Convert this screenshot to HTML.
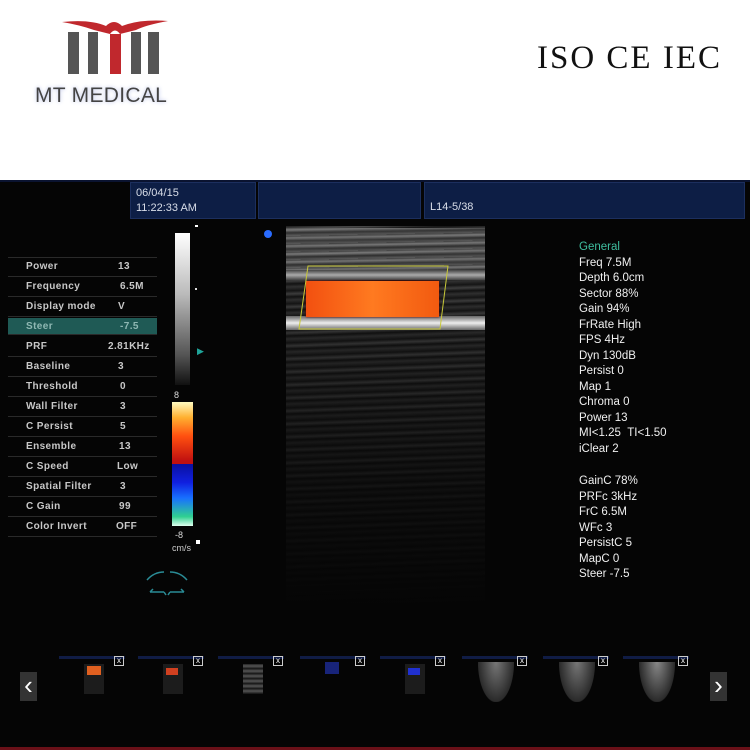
<!DOCTYPE html>
<html><head><meta charset="utf-8"><style>
*{margin:0;padding:0;box-sizing:border-box}
body{width:750px;height:750px;background:#fff;position:relative;overflow:hidden;font-family:"Liberation Sans",sans-serif}
.a{position:absolute}
#dark{left:0;top:180px;width:750px;height:570px;background:#050505}
.hb{background:#0d1e45;border:1px solid #1c2f5e;color:#d8dde8;font-size:11px;line-height:15px;padding:3px 5px}
.row{position:absolute;left:8px;width:149px;height:20px;border-bottom:1px solid #2a2a2a;font-size:10px;font-weight:bold;color:#c8c8c8;letter-spacing:.4px}
.row span{position:absolute;top:4px}
.rt{position:absolute;left:579px;color:#f0f0f0;font-size:11.5px;line-height:15.5px}
.th{position:absolute;top:656px;width:66px;height:56px}
.x{position:absolute;left:55px;top:0;width:10px;height:10px;border:1px solid #ccc;color:#fff;font-size:8px;text-align:center;line-height:8px}
.bar{position:absolute;left:0;top:0;width:66px;height:3px;background:#101c45}
</style></head><body>
<!-- logo -->
<svg class="a" style="left:60px;top:16px" width="110" height="62" viewBox="0 0 110 62">
<path d="M2 6 Q30 3 46 10 Q54 2 62 10 Q80 3 108 5 Q86 9 76 14 L60 18 Q55 11 50 18 L34 14 Q20 9 2 6Z" fill="#c0282d"/>
<rect x="8" y="16" width="11" height="42" fill="#555"/>
<rect x="28" y="16" width="10" height="42" fill="#555"/>
<rect x="50" y="18" width="11" height="40" fill="#c0282d"/>
<rect x="71" y="16" width="10" height="42" fill="#555"/>
<rect x="88" y="16" width="11" height="42" fill="#555"/>
</svg>
<div class="a" style="left:35px;top:84px;font-size:21px;color:#444;letter-spacing:.3px;text-shadow:0 0 4px #b8c0e8">MT MEDICAL</div>
<div class="a" style="left:537px;top:40px;font-family:'Liberation Serif',serif;font-size:33px;color:#111;letter-spacing:2px">ISO CE IEC</div>

<div class="a" id="dark"></div>
<div class="a" style="left:0;top:180px;width:750px;height:2px;background:#0a1330"></div>
<div class="a hb" style="left:130px;top:182px;width:126px;height:37px">06/04/15<br>11:22:33 AM</div>
<div class="a hb" style="left:258px;top:182px;width:163px;height:37px"></div>
<div class="a hb" style="left:424px;top:182px;width:321px;height:37px;padding-top:17px">L14-5/38</div>
<div class="a" style="left:264px;top:230px;width:8px;height:8px;border-radius:50%;background:#2a6cff"></div>

<!-- table -->
<div class="a" style="left:8px;top:257px;width:149px;border-top:1px solid #2a2a2a"></div>
<div class="row" style="top:257px"><span style="left:18px">Power</span><span style="left:110px">13</span></div>
<div class="row" style="top:277px"><span style="left:18px">Frequency</span><span style="left:112px">6.5M</span></div>
<div class="row" style="top:297px"><span style="left:18px">Display mode</span><span style="left:110px">V</span></div>
<div class="row" style="top:318px;height:17px;background:#1f5a55;color:#8fb8b3"><span style="left:18px;top:3px">Steer</span><span style="left:112px;top:3px">-7.5</span></div>
<div class="row" style="top:337px"><span style="left:18px">PRF</span><span style="left:100px">2.81KHz</span></div>
<div class="row" style="top:357px"><span style="left:18px">Baseline</span><span style="left:110px">3</span></div>
<div class="row" style="top:377px"><span style="left:18px">Threshold</span><span style="left:112px">0</span></div>
<div class="row" style="top:397px"><span style="left:18px">Wall Filter</span><span style="left:112px">3</span></div>
<div class="row" style="top:417px"><span style="left:18px">C Persist</span><span style="left:112px">5</span></div>
<div class="row" style="top:437px"><span style="left:18px">Ensemble</span><span style="left:111px">13</span></div>
<div class="row" style="top:457px"><span style="left:18px">C Speed</span><span style="left:109px">Low</span></div>
<div class="row" style="top:477px"><span style="left:18px">Spatial Filter</span><span style="left:112px">3</span></div>
<div class="row" style="top:497px"><span style="left:18px">C Gain</span><span style="left:111px">99</span></div>
<div class="row" style="top:517px"><span style="left:18px">Color Invert</span><span style="left:108px">OFF</span></div>

<!-- bars -->
<div class="a" style="left:175px;top:233px;width:15px;height:152px;background:linear-gradient(#fff,#bbb 40%,#555 80%,#111)"></div>
<div class="a" style="left:195px;top:225px;width:3px;height:2px;background:#fff"></div>
<div class="a" style="left:195px;top:288px;width:2px;height:2px;background:#ddd"></div>
<div class="a" style="left:197px;top:346px;color:#1fa59a;font-size:9px">▶</div>
<div class="a" style="left:174px;top:390px;color:#ddd;font-size:9px">8</div>
<div class="a" style="left:172px;top:402px;width:21px;height:62px;background:linear-gradient(#fffbc0,#ffb030 25%,#ff5010 55%,#c01010 95%)"></div>
<div class="a" style="left:172px;top:464px;width:21px;height:62px;background:linear-gradient(#0a10a0,#1020e0 30%,#1870ff 55%,#30d090 85%,#e0fff0)"></div>
<div class="a" style="left:175px;top:530px;color:#ddd;font-size:9px">-8</div>
<div class="a" style="left:172px;top:543px;color:#ccc;font-size:9px">cm/s</div>
<div class="a" style="left:196px;top:540px;width:4px;height:4px;background:#fff"></div>
<svg class="a" style="left:144px;top:570px" width="46" height="28"><path d="M3 10 Q10 2 20 2 M26 2 Q36 2 43 10 M6 22 L20 22 M26 22 L40 22 M6 22 l3 -3 M40 22 l-3 -3 M20 22 l2 3 M26 22 l-2 3" stroke="#2a8c96" stroke-width="1.5" fill="none"/></svg>

<!-- ultrasound -->
<div class="a" style="left:286px;top:226px;width:199px;height:380px;background:
linear-gradient(rgba(5,5,5,0),rgba(5,5,5,.35) 30%,rgba(5,5,5,.8) 70%,#050505),
repeating-linear-gradient(178deg,#1a1a1a 0,#4a4a4a 3px,#151515 6px,#3a3a3a 9px,#181818 13px);"></div>
<div class="a" style="left:286px;top:228px;width:199px;height:42px;background:repeating-linear-gradient(179deg,#444 0,#888 2px,#333 5px,#666 8px);opacity:.8"></div>
<div class="a" style="left:286px;top:316px;width:199px;height:14px;background:linear-gradient(#666,#eee 50%,#666)"></div>
<div class="a" style="left:286px;top:270px;width:199px;height:10px;background:linear-gradient(#444,#aaa,#444)"></div>
<div class="a" style="left:306px;top:281px;width:133px;height:36px;background:linear-gradient(90deg,#f25010,#ff7a20 50%,#f25a10);box-shadow:0 0 2px #600"></div>
<svg class="a" style="left:298px;top:265px" width="152" height="66"><polygon points="10,1 150,1 142,64 1,64" fill="none" stroke="#c8c838" stroke-width="1"/></svg>

<!-- right text -->
<div class="rt" style="top:240px"><span style="color:#3fbfa0">General</span><br>Freq 7.5M<br>Depth 6.0cm<br>Sector 88%<br>Gain 94%<br>FrRate High<br>FPS 4Hz<br>Dyn 130dB<br>Persist 0<br>Map 1<br>Chroma 0<br>Power 13<br>MI&lt;1.25 &nbsp;TI&lt;1.50<br>iClear 2</div>
<div class="rt" style="top:474px">GainC 78%<br>PRFc 3kHz<br>FrC 6.5M<br>WFc 3<br>PersistC 5<br>MapC 0<br>Steer -7.5</div>

<!-- thumbnails -->
<div class="a" style="left:20px;top:672px;width:17px;height:29px;background:#333;color:#fff;font-size:26px;line-height:27px;text-align:center">‹</div>
<div class="a" style="left:710px;top:672px;width:17px;height:29px;background:#333;color:#fff;font-size:26px;line-height:27px;text-align:center">›</div>
<div class="th" style="left:59px"><div class="bar"></div><div class="a" style="left:25px;top:8px;width:20px;height:30px;background:#1c1c1c"></div><div class="a" style="left:28px;top:10px;width:14px;height:9px;background:#e06020"></div><div class="x">x</div></div>
<div class="th" style="left:138px"><div class="bar"></div><div class="a" style="left:25px;top:8px;width:20px;height:30px;background:#1c1c1c"></div><div class="a" style="left:28px;top:12px;width:12px;height:7px;background:#d04020"></div><div class="x">x</div></div>
<div class="th" style="left:218px"><div class="bar"></div><div class="a" style="left:25px;top:8px;width:20px;height:30px;background:repeating-linear-gradient(#222 0,#555 2px,#111 5px)"></div><div class="x">x</div></div>
<div class="th" style="left:300px"><div class="bar"></div><div class="a" style="left:25px;top:6px;width:14px;height:12px;background:#18247a"></div><div class="x">x</div></div>
<div class="th" style="left:380px"><div class="bar"></div><div class="a" style="left:25px;top:8px;width:20px;height:30px;background:#1c1c1c"></div><div class="a" style="left:28px;top:12px;width:12px;height:7px;background:#2030d0"></div><div class="x">x</div></div>
<div class="th" style="left:462px"><div class="bar"></div><div class="a" style="left:16px;top:6px;width:36px;height:40px;background:radial-gradient(ellipse at 50% 0,#777,#2a2a2a 70%,transparent 72%)"></div><div class="x">x</div></div>
<div class="th" style="left:543px"><div class="bar"></div><div class="a" style="left:16px;top:6px;width:36px;height:40px;background:radial-gradient(ellipse at 50% 0,#777,#2a2a2a 70%,transparent 72%)"></div><div class="x">x</div></div>
<div class="th" style="left:623px"><div class="bar"></div><div class="a" style="left:16px;top:6px;width:36px;height:40px;background:radial-gradient(ellipse at 50% 0,#888,#2a2a2a 70%,transparent 72%)"></div><div class="x">x</div></div>
<div class="a" style="left:0;top:747px;width:750px;height:3px;background:#6a1018"></div>
</body></html>
